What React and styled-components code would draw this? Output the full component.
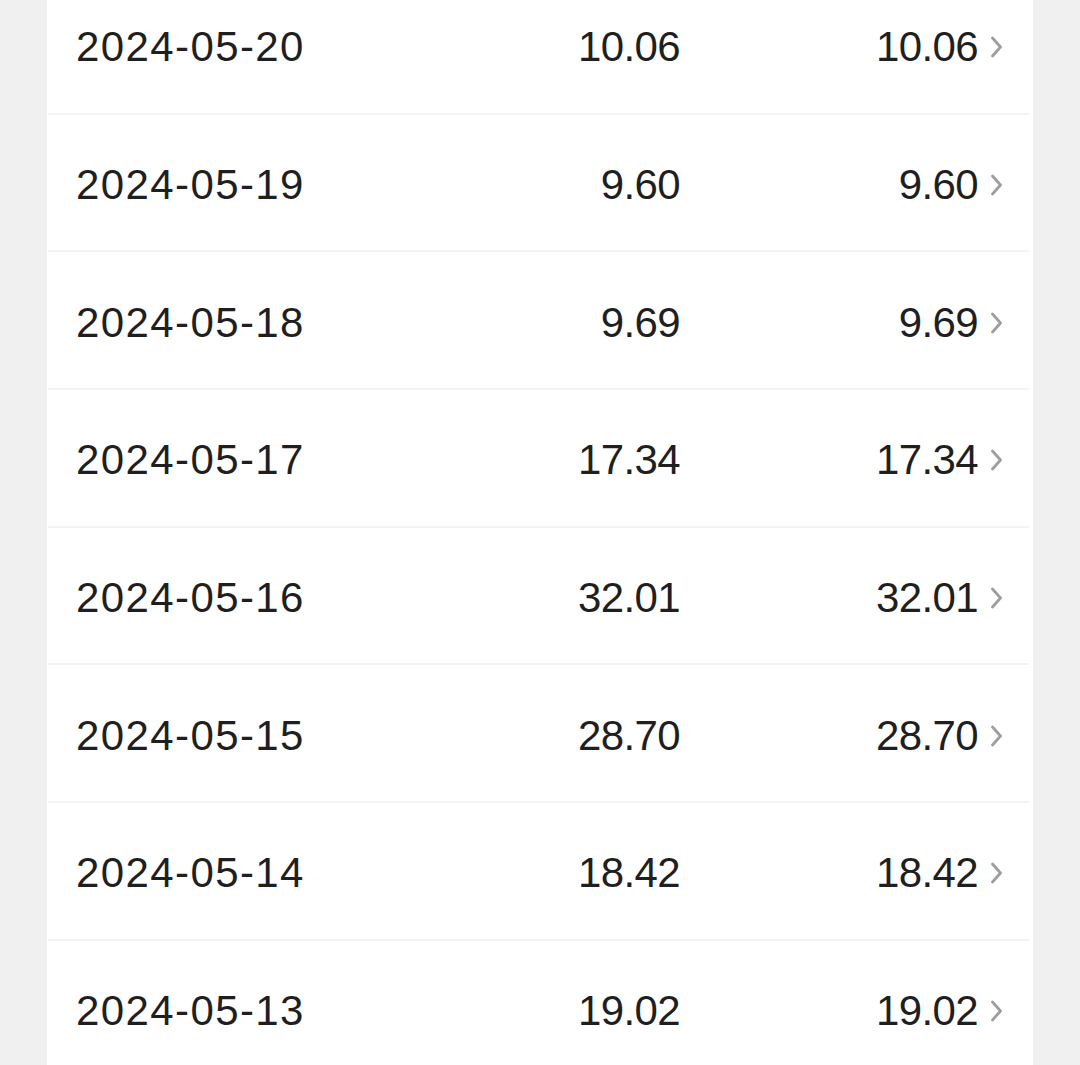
import styled, { createGlobalStyle } from "styled-components";

const GlobalStyle = createGlobalStyle`
  html, body {
    margin: 0;
    padding: 0;
    background-color: #f0f0f0;
    overflow: hidden;
  }
  body {
    font-family: "Liberation Sans", Arial, sans-serif;
  }
`;

const Page = styled.div`
  width: 1080px;
  height: 1065px;
  overflow: hidden;
  background-color: #f0f0f0;
`;

const Card = styled.div`
  margin: -23px 0 0 47px;
  width: 986px;
  background-color: #ffffff;
`;

const Row = styled.div`
  display: grid;
  grid-template-columns: 1fr 300px 310px 12px;
  align-items: center;
  height: 137.7px;
  box-sizing: border-box;
  padding: 3px 31px 0 29px;
  position: relative;
  &:not(:last-child)::after {
    content: "";
    position: absolute;
    left: 1px;
    right: 4px;
    bottom: 0;
    height: 2px;
    background-color: #f3f3f3;
  }
`;

const Cell = styled.div`
  font-size: 42px;
  letter-spacing: ${(props) => (props.right ? "-0.6px" : "1.4px")};
  color: #1f1f1f;
  text-align: ${(props) => (props.right ? "right" : "left")};
  padding-right: ${(props) => props.pr || 0}px;
  line-height: 1;
`;

const Chevron = styled.svg`
  width: 12px;
  height: 24px;
  display: block;
`;

const rows = [
  ["2024-05-20", "10.06"],
  ["2024-05-19", "9.60"],
  ["2024-05-18", "9.69"],
  ["2024-05-17", "17.34"],
  ["2024-05-16", "32.01"],
  ["2024-05-15", "28.70"],
  ["2024-05-14", "18.42"],
  ["2024-05-13", "19.02"],
];

const App = () => {
  return (
    <Page>
      <GlobalStyle />
      <Card>
        {rows.map(([date, amount]) => (
          <Row key={date}>
            <Cell>{date}</Cell>
            <Cell right>{amount}</Cell>
            <Cell right pr={12}>
              {amount}
            </Cell>
            <Chevron viewBox="0 0 12 24">
              <path
                d="M2.5 3 L10.5 12 L2.5 21"
                fill="none"
                stroke="#9e9e9e"
                strokeWidth="2.8"
                strokeLinecap="round"
                strokeLinejoin="round"
              />
            </Chevron>
          </Row>
        ))}
      </Card>
    </Page>
  );
};

export default App;
